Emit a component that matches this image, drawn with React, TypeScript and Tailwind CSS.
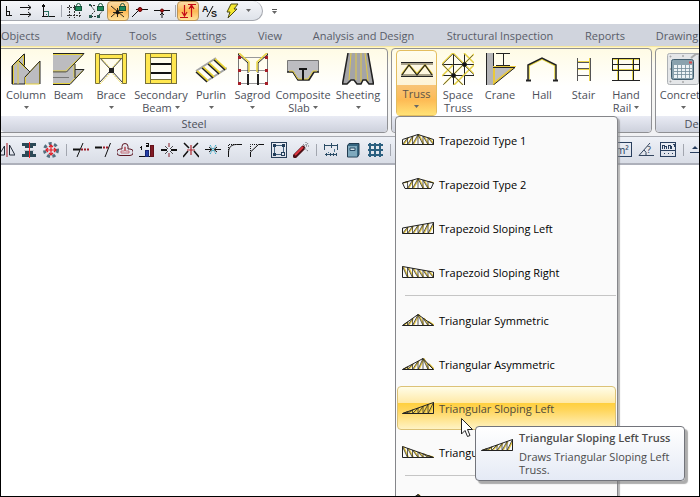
import React from 'react';
import clsx from 'clsx';

interface IconProps {
  children: React.ReactNode;
  crisp?: boolean;
}

// 16px toolbar glyph
const Glyph: React.FC<IconProps> = ({ children, crisp = true }) => (
  <svg viewBox="0 0 16 16" fill="none" stroke="#111" shapeRendering={crisp ? 'crispEdges' : 'auto'} className="h-4 w-4 shrink-0" aria-hidden="true">
    {children}
  </svg>
);

// 32px ribbon picture
const Picture: React.FC<IconProps> = ({ children, crisp = false }) => (
  <svg viewBox="0 0 32 32" fill="none" stroke="#222" shapeRendering={crisp ? 'crispEdges' : 'auto'} className="h-8 w-8 shrink-0" aria-hidden="true">
    {children}
  </svg>
);

type Point = [number, number];

interface TrussShape {
  top: Point[];
  bottom: Point[];
  peak: number;
}

const shapes: Record<string, TrussShape> = {
  trapezoid1: { top: [[0.5, 5.5], [16, 0.5], [31.5, 5.5]], bottom: [[0.5, 10.5], [31.5, 10.5]], peak: 16 },
  trapezoid2: { top: [[0.5, 5], [16, 0.5], [31.5, 5]], bottom: [[0.5, 5], [3, 10.5], [29, 10.5], [31.5, 5]], peak: 16 },
  trapezoidLeft: { top: [[0.5, 6], [31.5, 0.5]], bottom: [[0.5, 11.5], [31.5, 11.5]], peak: 32 },
  trapezoidRight: { top: [[0.5, 0.5], [31.5, 6]], bottom: [[0.5, 11.5], [31.5, 11.5]], peak: 0 },
  symmetric: { top: [[0.5, 11.5], [16, 0.5], [31.5, 11.5]], bottom: [[0.5, 11.5], [31.5, 11.5]], peak: 16 },
  asymmetric: { top: [[0.5, 11.5], [21, 0.5], [31.5, 11.5]], bottom: [[0.5, 11.5], [31.5, 11.5]], peak: 21 },
  triangleLeft: { top: [[0.5, 11.5], [31.5, 0.5]], bottom: [[0.5, 11.5], [31.5, 11.5]], peak: 32 },
  triangleRight: { top: [[0.5, 0.5], [31.5, 11.5]], bottom: [[0.5, 11.5], [31.5, 11.5]], peak: 0 },
};

const heightAt = (line: Point[], x: number) => {
  for (let i = 1; i < line.length; i++) {
    const [x0, y0] = line[i - 1];
    const [x1, y1] = line[i];
    if (x <= x1) return y0 + ((x - x0) / (x1 - x0)) * (y1 - y0);
  }
  return line[line.length - 1][1];
};

const Truss: React.FC<{ shape: string }> = ({ shape }) => {
  const { top, bottom, peak } = shapes[shape];
  const nodes = [0.5, 5.5, 10.5, 16, 21, 26, 31.5];
  const outline = [...top, ...[...bottom].reverse()].map((p) => p.join(',')).join(' ');
  return (
    <svg viewBox="0 0 32 12" fill="none" className="h-3 w-8 shrink-0" aria-hidden="true">
      {nodes.slice(1).map((x, i) => {
        const prev = nodes[i];
        const rising = (x + prev) / 2 < peak;
        const from = rising ? prev : x;
        const to = rising ? x : prev;
        return (
          <g key={x}>
            <path d={`M${from + 1} ${heightAt(bottom, from)}L${to + 1} ${heightAt(top, to)}`} stroke="#e6c63c" strokeWidth="1.3" />
            <path d={`M${from} ${heightAt(bottom, from)}L${to} ${heightAt(top, to)}M${x} ${heightAt(bottom, x)}V${heightAt(top, x)}`} stroke="#2a2a22" strokeWidth=".75" />
          </g>
        );
      })}
      <polygon points={outline} stroke="#222" />
    </svg>
  );
};

const Caret: React.FC = () => (
  <svg viewBox="0 0 5 3" className="inline-block h-[3px] w-[5px] shrink-0" aria-hidden="true">
    <path d="M0 0H5L2.5 3Z" fill="#666" />
  </svg>
);

const Lock = () => (
  <g shapeRendering="auto">
    <path d="M10.5 4V2.500a2 2 0 0 1 4 0V4" stroke="#1c5b40" />
    <rect x="9.500" y="3.500" width="6" height="4" fill="#1d8a5a" stroke="#14513a" />
  </g>
);

interface Tool {
  label: string;
  icon: React.ReactNode;
  active?: boolean;
}

const quickGroups: Tool[][] = [
  [
    { label: 'Ortho', icon: <Glyph><path d="M10.5 3v10M10 12.500h6M10.500 8.500h3v4" /></Glyph> },
    { label: 'Parallel', icon: <Glyph crisp={false}><path d="M2 4.500h11M2 11.500h11M10 2l3 2.500L10 7M10 9l3 2.500L10 14" /></Glyph> },
    { label: 'Perpendicular', icon: <Glyph><path d="M3.500 2v12M2 13.500h13M1.500 4.500l2-3 2 3" /><path d="M3.500 8.500h5v5M6 11h1" stroke="#297060" /></Glyph> },
  ],
  [
    { label: 'Grid lock', icon: <Glyph><path d="M3.500 2v13M8.500 2v13M13.500 9v6M1 4.500h8M1 12.500h15" stroke="#333" strokeDasharray="2 1" /><Lock /></Glyph> },
    { label: 'Snap lock', icon: <Glyph crisp={false}><path d="M2 2.500h6M3 3l4 5-5 5M3 13.500h7l4-5" stroke="#333" strokeDasharray="2 1" /><path d="M1 12h3v3H1zM9 12h3v3H9zM1 1h2v2H1z" fill="#285b50" stroke="none" /><Lock /></Glyph> },
    { label: 'Node lock', active: true, icon: <Glyph crisp={false}><path d="M1 3l13 11M1 14l9-8M7.500 5v9M3 9.500h10" stroke="#332b19" /><circle cx="7.500" cy="9.500" r="1.500" fill="#111" /><Lock /></Glyph> },
    { label: 'Nearest', icon: <Glyph crisp={false}><path d="M0 14l8-8M4 6.500h12M4 10l4-4" /><circle cx="8" cy="6.500" r="2" fill="#b10f12" stroke="#620000" /></Glyph> },
    { label: 'Midpoint', icon: <Glyph crisp={false}><path d="M0 7.500h16M8 7v8M6 12l2-2 2 2" /><circle cx="8" cy="7.500" r="1.500" fill="#b10f12" stroke="#620000" /></Glyph> },
  ],
  [
    { label: 'Extents', active: true, icon: <Glyph crisp={false}><path d="M4.500 2v10M2 9l2.500 4L7 9M0 14.500h8M11.500 14V3M9 6l2.500-4L14 6M8 1.500h8" stroke="#c50b15" strokeWidth="1.200" /></Glyph> },
    { label: 'Text style', icon: <Glyph crisp={false}><path d="M5 14L11 3" /><text x="0" y="9" fontSize="9" fontFamily="Liberation Sans, sans-serif" fontWeight="700" fill="#111" stroke="none">A</text><text x="9" y="14" fontSize="9" fontFamily="Liberation Sans, sans-serif" fontWeight="700" fill="#111" stroke="none">S</text></Glyph> },
    { label: 'Quick run', icon: <Glyph crisp={false}><path d="M7 1h7L10 6h3L4 15l2-6H3Z" fill="#f4e72e" stroke="#4a4a16" /></Glyph> },
  ],
];

const editGroups: Tool[][] = [
  [
    { label: 'Mirror', icon: <Glyph crisp={false}><path d="M5.500 4v9H0ZM10.500 3v10H16Z" stroke="#222b38" /><path d="M8 1v14" stroke="#a01620" /></Glyph> },
    { label: 'Align', icon: <Glyph><path d="M1 1h14v3h-3v2H4V4H1ZM4 9h8v3h3v3H1v-3h3Z" fill="#2c4a57" stroke="none" /><path d="M3 8.500h10" stroke="#bdc7ce" /><path d="M8.500 0v16" stroke="#f22" /></Glyph> },
    { label: 'Move', icon: <Glyph crisp={false}><circle cx="8" cy="8" r="6.500" stroke="#54707f" strokeWidth="3" strokeDasharray="3 2.500" /><path d="M8 3v10M3 8h10M6 5l2-2 2 2M6 11l2 2 2-2M5 6L3 8l2 2M11 6l2 2-2 2" stroke="#e21d25" strokeWidth="1.200" /></Glyph> },
  ],
  [
    { label: 'Trim', icon: <Glyph crisp={false}><path d="M10 1L4 15" /><path d="M0 7.500h7" strokeWidth="2" /><path d="M8 7.500h8" stroke="#9d1c28" strokeDasharray="2 1" strokeWidth="2" /></Glyph> },
    { label: 'Extend', icon: <Glyph crisp={false}><path d="M15.500 1L10 15" /><path d="M0 5.500h7" strokeWidth="2" /><path d="M8 5.500h6" stroke="#9d1c28" strokeDasharray="2 1" strokeWidth="2" /></Glyph> },
    { label: 'Offset', icon: <Glyph crisp={false}><path d="M5 7V4.500a3 3 0 0 1 6 0V7h2a3 3 0 0 1 0 6.500H3A3 3 0 0 1 3 7Z" stroke="#5d1722" /><path d="M7.500 9V5h1v4H12v2H4V9Z" stroke="#c36c76" /></Glyph> },
    { label: 'Order', icon: <Glyph><path d="M0 14.500h15" /><path d="M6 8h3v6H6Z" fill="#233fa6" stroke="#162775" /><path d="M11 3h3v11h-3Z" fill="#811a25" stroke="#65121a" /><path d="M2.500 4v4M1 5h1M7 1h2v2H7v1h3" /></Glyph> },
    { label: 'Break', icon: <Glyph crisp={false}><path d="M0 8h6M10 8h6" strokeWidth="2" /><path d="M8 1v4M8 11v4" stroke="#871f29" /><path d="M4 4l3 3M12 4L9 7M4 12l3-3M12 12L9 9" strokeWidth=".7" /></Glyph> },
    { label: 'Intersect', icon: <Glyph crisp={false}><path d="M1 1l5 5M15 1l-5 5M5 9l-5 6M11 9l5 6" strokeWidth="1.500" /><path d="M8 3v10M4 8h8" stroke="#ae2931" strokeWidth="1.200" /></Glyph> },
    { label: 'Join', icon: <Glyph crisp={false}><path d="M0 7.500h6M10 7.500h6M4 5l3 2.500L4 10M12 5L9 7.500 12 10" /><path d="M5 3l6 9M11 3L5 12" stroke="#2ba6c4" strokeDasharray="2 1" /></Glyph> },
    { label: 'Fillet', icon: <Glyph crisp={false}><path d="M1.500 15v-4c0-6 3-8.500 8-8.500H15" /><path d="M1.500 10V2.500H9" strokeDasharray="1 1" /></Glyph> },
    { label: 'Chamfer', icon: <Glyph crisp={false}><path d="M1.500 15v-5l8-7.500H15" /><path d="M1.500 9V2.500H9" strokeDasharray="1 1" /></Glyph> },
    { label: 'Stretch', icon: <Glyph><rect x=".5" y=".5" width="15" height="15" stroke="#283e58" /><path d="M3.500 5v7M5 3.500h7M12.500 5v5M5 12.500h5" stroke="#42617d" /><path d="M2 2h3v3H2zM11 2h3v3h-3zM2 11h3v3H2z" fill="#223d59" stroke="none" /><rect x="10.500" y="10.500" width="3" height="3" fill="#e6eaf1" stroke="#223d59" /></Glyph> },
    { label: 'Explode', icon: <Glyph crisp={false}><path d="M2 14l8-8" stroke="#4c1016" strokeWidth="4.500" strokeLinecap="round" /><path d="M2 13l8-8" stroke="#df343e" strokeWidth="2" /><path d="M10 2l2 2M13 0v4M16 4h-3M11 6l4 3M15 1l-2 3" stroke="#696b70" strokeDasharray="1 1" /></Glyph> },
  ],
  [
    { label: 'Dimension', icon: <Glyph><path d="M1 3.500h14M1.500 2v6M8.500 1v5M14.500 2v6M2 12.500h12" stroke="#294b65" /><path d="M3 11v3M7 11v3M10 11v3M13 11v3" stroke="#294b65" /><path d="M5 10v1M11 7v3" stroke="#4d7994" /></Glyph> },
    { label: 'Calculator', icon: <Glyph crisp={false}><path d="M2.500 3.500L4 1.500h10v11L12.500 15H2.500Z" fill="#356681" stroke="#223c50" /><path d="M3 4h9v10.500H3Z" fill="#7fa9bd" stroke="none" /><path d="M5 6h5v2.500H5Z" fill="#d9e7ee" stroke="#294b65" /></Glyph> },
    { label: 'Grid', icon: <Glyph><path d="M3 1v14M8 1v14M13 1v14M1 3h15M1 8h15M1 13h15" stroke="#2b6080" strokeWidth="2" /></Glyph> },
  ],
];

const measureTools: Tool[] = [
  { label: 'Area', icon: <Glyph><rect x="-2.500" y=".5" width="18" height="14" stroke="#293f5e" /><text x="0" y="12" fontSize="10" fontFamily="Noto Sans, sans-serif" fill="#293f5e" stroke="none">m²</text></Glyph> },
  { label: 'Angle', icon: <Glyph crisp={false}><path d="M12 1L1 13.500h15M6 8q3 2 2 5" stroke="#34465f" /><text x="9" y="11" fontSize="9" fontFamily="Noto Sans, sans-serif" fill="#293f5e" stroke="none">?</text></Glyph> },
  { label: 'Units', icon: <Glyph><rect x=".5" y=".5" width="15" height="14" stroke="#293f5e" /><path d="M2.500 7V3.500h2V7M4.500 4.500h2V7M8.500 7V3.500h2V7M10.500 4.500h1V7M13 2.500h1v2M1 8.500h14M3.500 11.500h1M7.500 11.500h1M11.500 11.500h1" stroke="#293f5e" /></Glyph> },
];

const ToolButton: React.FC<{ tool: Tool }> = ({ tool }) => (
  <button
    type="button"
    aria-label={tool.label}
    aria-pressed={tool.active}
    className={clsx(
      'flex h-5 w-[22px] shrink-0 items-center justify-center rounded-sm',
      tool.active && 'border border-[#b99458] bg-linear-to-b from-[#fbdda5] via-[#fdb853] to-[#fee19a]'
    )}
  >
    {tool.icon}
  </button>
);

const tabs = [
  { name: 'Objects', width: 'w-[50px] pr-3' },
  { name: 'Modify', width: 'w-[66px]' },
  { name: 'Tools', width: 'w-[52px]' },
  { name: 'Settings', width: 'w-[74px]' },
  { name: 'View', width: 'w-[54px]' },
  { name: 'Analysis and Design', width: 'w-[133px]' },
  { name: 'Structural Inspection', width: 'w-[140px]' },
  { name: 'Reports', width: 'w-[70px]' },
  { name: 'Drawing', width: 'w-[74px]' },
];

interface Command {
  name: string;
  second?: string;
  menu?: boolean;
  width: string;
  icon: React.ReactNode;
}

const steelCommands: Command[] = [
  {
    name: 'Column', menu: true, width: 'w-[42px]',
    icon: <Picture><path d="M2 31V13L7 7v24Z" fill="#c0c0c3" stroke="none" /><path d="M2 13L14 1v12l6 6-5 5v7H2Z" fill="#bcbcc0" /><path d="M2.500 31V12.500L14.500 1v11M8 7l12 12" stroke="#23231f" /><path d="M3.500 31V13L13.500 2.500V12M8 9v22M8 8l8 8" stroke="#e5cf3c" /><path d="M15.500 31V24L29.500 8.500V31Z" fill="#bcbcc0" stroke="#e5cf3c" /><path d="M15 24L30 8v23" /></Picture>,
  },
  {
    name: 'Beam', menu: false, width: 'w-[43px]',
    icon: <Picture><path d="M0 1.500h31L13 18.500H0Z" fill="#bcbcbf" stroke="none" /><path d="M0 20h13l8-8v5h10L17 31H0Z" fill="#bcbcbf" stroke="none" /><path d="M0 24.500h16" stroke="#777" /><path d="M0 1.500h30M0 30.500h17M30 1.500L12.500 18H0M21 11v13M30 17.500L16 31" stroke="#e7d33d" /><path d="M0 .5h31L13.500 19H0M22 11v14M22 16.500h9L17 31.500H0" /></Picture>,
  },
  {
    name: 'Brace', menu: true, width: 'w-[42px]',
    icon: <Picture><path d="M4 4l24 26M28 4L4 30" stroke="#333" /><path d="M5 4l11 12M27 4L16 16M5 31l11-12M27 31L16 19" stroke="#e4d14a" strokeDasharray="2 1" /><path d="M.5.5h4v30h-4ZM27.500.5h4v30h-4ZM4.500 1.500h23v4h-23Z" fill="#ffe74f" stroke="#77713a" /><path d="M14 15h5v5h-5Z" fill="#222" stroke="none" /></Picture>,
  },
  {
    name: 'Secondary', second: 'Beam', menu: true, width: 'w-[58px]',
    icon: <Picture crisp><path d="M.5.5h5v30h-5ZM26.500.5h5v30h-5ZM5.500.5h21v4h-21ZM5.500 26.500h21v4h-21Z" fill="#ffe74f" stroke="#77713a" /><path d="M6 11h20M6 20h20" stroke="#111" strokeWidth="2" /></Picture>,
  },
  {
    name: 'Purlin', menu: true, width: 'w-[42px]',
    icon: <Picture><path d="M1 18L21 5M12 28l20-13" stroke="#a5a5a5" strokeWidth="2" /><path d="M2 18l11 10M8 14l11 10M14 10l11 10M20 6l11 10" stroke="#e9d434" strokeWidth="2" /><path d="M1 19l11 10M7 15l11 10M13 11l11 10M19 7l11 10" strokeWidth="1.500" /></Picture>,
  },
  {
    name: 'Sagrod', menu: true, width: 'w-[41px]',
    icon: <Picture><path d="M1 4.500h30M1 17.500h30M1 30.500h30" stroke="#999" /><path d="M1.500 0v32M30.500 0v32" stroke="#777" /><path d="M1 1l10 9v10M31 1L21 10v10" /><path d="M2 0l10 9v10M30 0L20 9v10" stroke="#ead643" strokeWidth="1.500" /><path d="M11 21v11M21 21v11" strokeWidth="2" /><path d="M1 3h3v3H1zM28 3h3v3h-3zM1 16h3v3H1zM28 16h3v3h-3zM1 29h3v3H1zM28 29h3v3h-3z" fill="#a51d27" stroke="none" /></Picture>,
  },
  {
    name: 'Composite', second: 'Slab', menu: true, width: 'w-[60px]',
    icon: <Picture><path d="M.5 7.500h31v11h-5l-5 8h-11l-5-8h-5Z" fill="#bdbdc1" stroke="#777" /><path d="M0 19h6l5 8h11l5-8h5" stroke="#222" strokeWidth="1.500" /><path d="M2 18h4l5 8h10l5-8h4" stroke="#e8d144" /><path d="M12 16h8M16 16v11" strokeWidth="2" stroke="#171717" /></Picture>,
  },
  {
    name: 'Sheeting', menu: true, width: 'w-[50px]',
    icon: <Picture><path d="M6 0h20l6 31h-5l-3-4h-3l-2 4h-4l-3-4H9l-4 4H0Z" fill="#a4a4a7" stroke="none" /><path d="M9 0L7 27M14 0v27M19 0v29M23 0l3 28" stroke="#e3ca43" /><path d="M6 0L.5 31H5l4-4h3l3 4h4l2-4h3l3 4h4.500L26 0" strokeWidth="1.500" /></Picture>,
  },
];

const modelCommands: Command[] = [
  {
    name: 'Space', second: 'Truss', width: 'w-[42px]',
    icon: <Picture><path d="M0 11.500h32M0 22.500h32M11.500 0v32M22.500 0v32" /><path d="M0 11L11 0l21 21M0 23l11-11M0 11l21 21M11 33L32 12M22 0l10 10M2 31L32 1" stroke="#e5cf42" strokeWidth="1.500" /><path d="M0 12L11 1l21 21M0 11l21 21M1 32L31 2" stroke="#444" strokeWidth=".7" /><circle cx="11.500" cy="22.500" r="2" fill="#111" /><circle cx="22.500" cy="11.500" r="2" fill="#111" /></Picture>,
  },
  {
    name: 'Crane', width: 'w-[42px]',
    icon: <Picture><path d="M3 0h6v32H3Z" fill="#b4b4b7" stroke="none" /><path d="M2.500 0v32M9.500 0v32" /><path d="M10 14h20L10 30Z" fill="#bdbdc0" stroke="#e9c93b" strokeWidth="2" /><path d="M9 14.500h22L10 31.500M12 .5h14M12 12.500h14M19.500 1v12" /></Picture>,
  },
  {
    name: 'Hall', width: 'w-[42px]',
    icon: <Picture><path d="M3 26V12.500L16 6l13 6.500V26" stroke="#e4d43f" strokeWidth="1.500" /><path d="M2 27V12L16 5l14 7v15" strokeWidth="1.500" /><path d="M0 27.500h5M27 27.500h5" strokeWidth="2" /></Picture>,
  },
  {
    name: 'Stair', width: 'w-[41px]',
    icon: <Picture crisp><path d="M9.500 5v23M22.500 5v23M10 9.500h12M10 15.500h12M10 22.500h12" stroke="#555" /><path d="M21.500 5v23M10 8.500h11M10 16.500h11" stroke="#ead448" /></Picture>,
  },
  {
    name: 'Hand', second: 'Rail', menu: true, width: 'w-[44px]',
    icon: <Picture crisp><path d="M3 16.500h26M7.500 6v21M22.500 6v21M3 6.500h26" stroke="#e6d54b" /><path d="M2.500 5.500h27v12h-27ZM2 11.500h28M8.500 5v22M23.500 5v22M2 27.500h28" /></Picture>,
  },
];

const concrete: Command = {
  name: 'Concrete', menu: true, width: 'w-[46px]',
  icon: (
    <Picture>
      <rect x=".5" y=".5" width="31" height="31" rx="2" fill="#e4e6e8" stroke="#adb1b5" />
      <circle cx="3.500" cy="3.500" r=".5" stroke="#999" /><circle cx="3.500" cy="28.500" r=".5" stroke="#999" /><circle cx="16" cy="3" r=".5" stroke="#999" /><circle cx="3.500" cy="16" r=".5" stroke="#999" /><circle cx="16" cy="29" r=".5" stroke="#999" />
      <rect x="4.500" y="6.500" width="22" height="20" rx="2" fill="#8aa2ae" stroke="#405d6e" />
      <path d="M7 12h18v13H7Z" fill="#edf3f6" stroke="none" />
      <path d="M7 15.500h18M7 18.500h18M7 21.500h18M10.500 12v13M14.500 12v13M18.500 12v13M22.500 12v13" stroke="#718a98" strokeWidth=".8" />
      <path d="M22 9.500h3" stroke="#d74c4d" strokeWidth="2" />
      <path d="M24 5l5-4h3" stroke="#aaa" strokeWidth="2" />
    </Picture>
  ),
};

const CommandButton: React.FC<{ command: Command }> = ({ command }) => (
  <button type="button" className={clsx('flex shrink-0 flex-col items-center pt-1 text-[#4c4f59]', command.width)}>
    {command.icon}
    <span className="mt-[3px] text-[11px] leading-[13px]">{command.name}</span>
    {command.second ? (
      <span className="flex items-center gap-[3px] text-[11px] leading-[13px]">
        {command.second}
        {command.menu && <Caret />}
      </span>
    ) : (
      command.menu && <span className="flex h-[13px] items-center"><Caret /></span>
    )}
  </button>
);

interface GroupProps {
  title: string;
  className?: string;
  children: React.ReactNode;
}

const RibbonGroup: React.FC<GroupProps> = ({ title, className, children }) => (
  <section
    aria-label={title}
    className={clsx('flex h-[85px] shrink-0 flex-col rounded border border-[#8f9094] bg-linear-to-b from-[#fffbe5] via-white via-45% to-white', className)}
  >
    <div className="flex h-[67px] shrink-0 px-1">{children}</div>
    <div className="flex flex-1 items-center justify-center rounded-b bg-linear-to-b from-[#e9ebf4] to-[#cdd1dc] text-[11px] leading-4 text-[#4c4f59]">
      {title}
    </div>
  </section>
);

const menuSections = [
  [
    { name: 'Trapezoid Type 1', shape: 'trapezoid1' },
    { name: 'Trapezoid Type 2', shape: 'trapezoid2' },
    { name: 'Trapezoid Sloping Left', shape: 'trapezoidLeft' },
    { name: 'Trapezoid Sloping Right', shape: 'trapezoidRight' },
  ],
  [
    { name: 'Triangular Symmetric', shape: 'symmetric' },
    { name: 'Triangular Asymmetric', shape: 'asymmetric' },
    { name: 'Triangular Sloping Left', shape: 'triangleLeft' },
    { name: 'Triangular Sloping Right', shape: 'triangleRight' },
  ],
  [{ name: '', shape: 'symmetric' }],
];

const Tooltip: React.FC = () => (
  <div
    role="tooltip"
    className="absolute top-10 left-[78px] z-20 flex w-[210px] gap-[6px] rounded-sm border border-[#72747b] bg-linear-to-b from-white to-[#e5eaf5] py-1 pl-[5px] text-left text-[11px] leading-[13px] text-[#4c4c4c] shadow-[3px_3px_1px_#77777799]"
  >
    <span className="mt-2"><Truss shape="triangleLeft" /></span>
    <span>
      <strong className="block font-semibold whitespace-nowrap">Triangular Sloping Left Truss</strong>
      <span className="mt-[6px] block">Draws Triangular Sloping Left<br />Truss.</span>
    </span>
  </div>
);

const Pointer: React.FC = () => (
  <svg viewBox="0 0 13 20" className="absolute top-8 left-16 z-30 h-5 w-[13px]" aria-hidden="true">
    <path d="M.5.5V16L4 12.500 6.500 18.500 9 17.500 6.500 11.500H11.500Z" fill="#fff" stroke="#222" />
  </svg>
);

const TrussMenu: React.FC = () => (
  <div role="menu" className="absolute top-full -left-px z-10 w-[223px] rounded-sm border border-[#85868a] bg-[#fafafa] p-px shadow-[2px_2px_1px_#88888899]">
    {menuSections.map((section, i) => (
      <React.Fragment key={i}>
        {i > 0 && <div role="separator" className="mt-px mb-[2px] ml-2 h-px bg-[#c5c5c5]" />}
        {section.map((item) => {
          const selected = item.name === 'Triangular Sloping Left';
          return (
            <div key={item.shape} className="relative">
              <button
                type="button"
                role="menuitem"
                aria-label={item.name || 'More trusses'}
                className={clsx(
                  'flex h-11 w-full items-center gap-[5px] rounded-sm border pl-1 text-[11px]',
                  selected
                    ? 'border-[#dcc277] bg-[linear-gradient(#fffde8,#ffe9a6_38%,#ffd03f_39%,#ffd65c_55%,#fff3c4)] text-[#4f4a38]'
                    : 'border-transparent text-black'
                )}
              >
                <Truss shape={item.shape} />
                <span className="pt-[2px]">{item.name}</span>
              </button>
              {selected && <Pointer />}
              {selected && <Tooltip />}
            </div>
          );
        })}
      </React.Fragment>
    ))}
  </div>
);

const Divider: React.FC<{ className: string }> = ({ className }) => (
  <div className={clsx('flex shrink-0 justify-center', className)}>
    <div className="h-3 w-px bg-[#a2a6af]" />
  </div>
);

export const App: React.FC = () => {
  return (
    <div className="flex h-screen flex-col overflow-hidden border border-black bg-white font-['Open_Sans','Noto_Sans',sans-serif]">
      <div className="flex h-[23px] shrink-0 items-start">
        <div className="flex h-5 items-center rounded-r-full border-r border-b border-[#a5a8af] bg-linear-to-b from-[#f5f6f9] to-[#dfe3ea] pr-2">
          <div className="-ml-2 flex items-center">
            {quickGroups.map((group, i) => (
              <React.Fragment key={i}>
                {i > 0 && <Divider className="w-1" />}
                {group.map((tool) => <ToolButton key={tool.label} tool={tool} />)}
              </React.Fragment>
            ))}
            <button type="button" aria-label="More snaps" className="flex h-5 w-[11px] items-center justify-center"><Caret /></button>
          </div>
        </div>
        <button type="button" aria-label="Customize toolbar" className="ml-2 flex h-5 w-[7px] flex-col items-center justify-center gap-px">
          <span className="h-px w-[5px] bg-[#555]" />
          <Caret />
        </button>
      </div>

      <nav className="flex h-[22px] shrink-0 bg-[#d0d4dd] pt-[2px]">
        {tabs.map((tab) => (
          <button key={tab.name} type="button" className={clsx('shrink-0 text-center text-[11px] whitespace-nowrap text-[#595d69]', tab.width)}>
            {tab.name}
          </button>
        ))}
      </nav>

      <div className="flex h-[90px] shrink-0 gap-[3px] border-t border-[#f6e7a0] bg-linear-to-b from-[#fff6c4] via-[#fbfaf3] via-20% to-[#f0f1f4] pt-px">
        <RibbonGroup title="Steel" className="-ml-1 w-[391px] pl-[3px]">
          {steelCommands.map((command) => <CommandButton key={command.name} command={command} />)}
        </RibbonGroup>
        <RibbonGroup title="Modeling" className="w-[261px]">
          <div className="relative mt-px flex shrink-0">
            <button
              type="button"
              aria-haspopup="menu"
              aria-expanded="true"
              className="flex w-[41px] flex-col items-center rounded-sm border border-[#e3bd5f] bg-linear-to-b from-[#fffdee] to-[#fbebc4] pt-[2px] text-[#5c5448]"
            >
              <Picture>
                <path d="M0 10.500h32M0 22.500h32" stroke="#aaa38b" strokeWidth="3" />
                <path d="M1 21l7-9 8 9 8-9 7 9" stroke="#e0c637" strokeWidth="2" />
                <path d="M0 9.500h32M0 23.500h32M1 22l7-10 8 10 8-10 7 10" strokeWidth="1.200" />
              </Picture>
              <span className="flex w-full flex-1 flex-col items-center bg-linear-to-b from-[#f8c477] via-[#fdbb55] to-[#ffe276] pt-[2px] text-[11px] leading-[13px]">
                Truss
                <span className="flex h-[13px] items-center"><Caret /></span>
              </span>
            </button>
            <TrussMenu />
          </div>
          {modelCommands.map((command) => <CommandButton key={command.name} command={command} />)}
        </RibbonGroup>
        <RibbonGroup title="Design" className="w-[94px]">
          <CommandButton command={concrete} />
        </RibbonGroup>
      </div>

      <div className="flex h-[29px] shrink-0 items-center border-t border-b-2 border-t-[#a8abb2] border-b-[#adb0ba] bg-linear-to-b from-[#eef1f7] to-[#d9dde6]">
        <div className="-ml-[5px] flex shrink-0 items-center">
          {editGroups.map((group, i) => (
            <React.Fragment key={i}>
              {i > 0 && <Divider className="w-2" />}
              {group.map((tool) => <ToolButton key={tool.label} tool={tool} />)}
            </React.Fragment>
          ))}
          <Divider className="w-2" />
        </div>
        <div className="ml-[219px] flex shrink-0 items-center">
          {measureTools.map((tool) => <ToolButton key={tool.label} tool={tool} />)}
          <Divider className="w-2" />
          <ToolButton tool={{ label: 'Level', icon: <Glyph crisp={false}><path d="M0 10.500h16" stroke="#293f5e" /><path d="M2 7l3-3 3 3Z" fill="#293f5e" stroke="none" /></Glyph> }} />
        </div>
      </div>

      <main className="flex-1 bg-white" aria-label="Drawing area" />
    </div>
  );
};
export default App;
